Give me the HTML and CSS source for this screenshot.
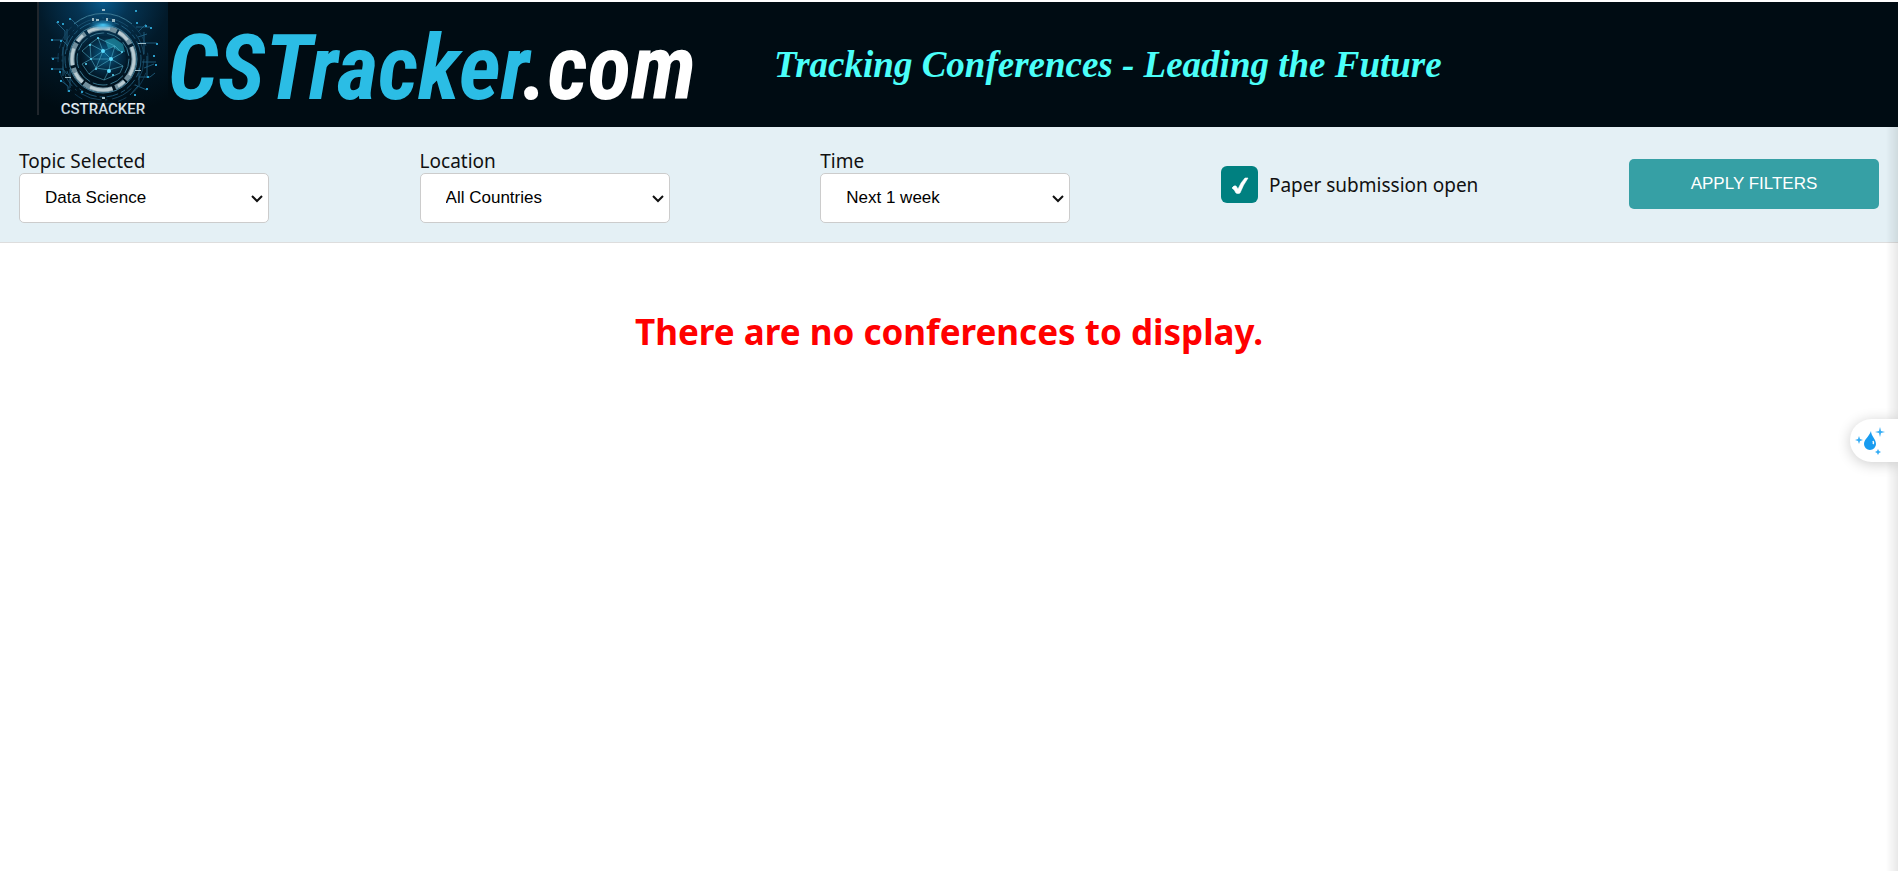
FILE: index.html
```html
<!DOCTYPE html>
<html lang="en">
<head>
<meta charset="utf-8">
<title>CSTracker.com</title>
<meta name="viewport" content="width=device-width, initial-scale=1">
<link rel="stylesheet" href="styles.css">
</head>
<body>
<header class="site-header">
  <a class="brand" href="#">
    <svg class="brand-emblem" viewBox="0 0 130 113" role="img" aria-label="CSTracker emblem">
      <defs>
        <radialGradient id="glow" cx="50%" cy="0%" r="100%">
          <stop offset="0" stop-color="#07588a"/>
          <stop offset=".2" stop-color="#053453"/>
          <stop offset=".5" stop-color="#021a2a"/>
          <stop offset="1" stop-color="#000c13"/>
        </radialGradient>
        <radialGradient id="globe" cx="55%" cy="40%" r="60%">
          <stop offset="0" stop-color="#0a618c"/>
          <stop offset=".5" stop-color="#05304b"/>
          <stop offset="1" stop-color="#010f1a"/>
        </radialGradient>
        <radialGradient id="flare">
          <stop offset="0" stop-color="#4fd2ff"/>
          <stop offset="1" stop-color="#0a7fc0" stop-opacity="0"/>
        </radialGradient>
        <linearGradient id="metal" x1="0" y1="0" x2="0" y2="1">
          <stop offset="0" stop-color="#fff"/>
          <stop offset="1" stop-color="#9fbccd"/>
        </linearGradient>
      </defs>
      <rect width="130" height="113" fill="url(#glow)"/>
      <path d="M0 0V113" stroke="#20262c" stroke-width="2"/>
      <g fill="none" stroke="#2a7196" stroke-width=".7">
        <path d="M14 38H24L30 44M18 20L27 29V38M21 56H13M14 67H25L29 72M22 78L30 84V90M33 17L40 24M108 22L100 30M98 25L112 25M102 41H119M100 35L109 32M104 60H118M106 66L116 62M101 75H112L117 71M97 83L109 88M92 93L100 84M29 27V48M25 45V74M32 67V86M106 30V52M109 54V76M101 66V84"/>
        <circle cx="65" cy="57" r="38" stroke-dasharray="12 2 5 3"/>
        <circle cx="65" cy="57" r="41" stroke="#205777" stroke-dasharray="22 5 2 4"/>
        <circle cx="65" cy="57" r="45" stroke="#164866" stroke-dasharray="9 5 25 7"/>
      </g>
      <path d="M36 22A45 45 0 0 1 94 22" fill="none" stroke="#397792"/>
      <g fill="none">
        <circle cx="65" cy="57" r="31" stroke="#718f9d" stroke-width="5" stroke-dasharray="23 2 11 3 30 2 17 3"/>
        <circle cx="65" cy="57" r="31" stroke="#b9cbd2" stroke-width="3" stroke-dasharray="17 8 8 6 23 9 12 8"/>
        <circle cx="65" cy="57" r="34" stroke="#3c7893" stroke-width="1"/>
        <circle cx="65" cy="57" r="26" stroke="#37738c" stroke-width="1" stroke-dasharray="15 3"/>
      </g>
      <circle cx="65" cy="57" r="23" fill="url(#globe)"/>
      <path d="M67 38L76 36L85 42L87 50L80 49L75 45L70 46Z" fill="#25a4ba" opacity=".6"/>
      <g fill="none" stroke="#5fc2dc" stroke-width=".5">
        <path d="M44 49L52 42L65 49L73 57L84 51L77 44L65 49L60 36L52 42L53 57L65 49L58 66L53 57L44 62L51 72L58 66L71 68L73 57L85 64L71 68L66 78L51 72M60 36L77 44L73 57M44 49L53 57L73 57M58 66L73 57M66 78L82 71L85 64"/>
      </g>
      <g fill="#5bdcff">
        <circle cx="65" cy="49" r="2"/><circle cx="73" cy="57" r="2"/><circle cx="71" cy="69" r="2"/><circle cx="84" cy="50" r="1"/><circle cx="58" cy="67" r="1"/><circle cx="53" cy="57" r="1"/><circle cx="48" cy="62" r="1"/><circle cx="52" cy="43" r="1"/><circle cx="75" cy="73" r="1"/><circle cx="60" cy="36" r="1"/>
      </g>
      <ellipse cx="65" cy="23" rx="15" ry="5" fill="url(#flare)"/>
      <g fill="#9dbac5">
        <path d="M54 16h2v3h-2zM58 17h3v2h-3zM68 16h2v3h-2zM74 17h3v3h-3zM100 41h8v1h-8zM27 75h6v1h-6zM97 68h6v1h-6zM64 7h3v2h-3zM64 95h3v2h-3z"/>
      </g>
      <g fill="#2a9cc8">
        <path d="M19 19h2v2h-2zM24 21h2v2h-2zM31 16h2v2h-2zM13 37h2v2h-2zM22 38h2v2h-2zM14 56h2v2h-2zM13 66h2v2h-2zM21 69h2v2h-2zM22 78h2v2h-2zM97 8h2v2h-2zM98 20h2v2h-2zM107 23h2v2h-2zM112 25h2v2h-2zM118 41h2v2h-2zM115 53h2v2h-2zM117 62h2v2h-2zM109 74h2v2h-2zM108 86h2v2h-2zM96 92h2v2h-2zM30 88h2v2h-2zM43 89h2v2h-2z"/>
      </g>
      <text class="emblem-text" x="65" y="112" text-anchor="middle" fill="url(#metal)">CSTRACKER</text>
    </svg>
    <span class="wordmark">CSTracker<span class="wordmark-tld">.com</span></span>
  </a>
  <p class="tagline">Tracking Conferences - Leading the Future</p>
</header>

<form class="filters">
  <div class="field">
    <label for="topic">Topic Selected</label>
    <div class="picker-wrap">
      <select id="topic" class="picker"><option>Data Science</option></select>
      <svg class="chevron" viewBox="0 0 12 8" aria-hidden="true"><path d="M1 1L6 6L11 1"/></svg>
    </div>
  </div>
  <div class="field">
    <label for="location">Location</label>
    <div class="picker-wrap">
      <select id="location" class="picker"><option>All Countries</option></select>
      <svg class="chevron" viewBox="0 0 12 8" aria-hidden="true"><path d="M1 1L6 6L11 1"/></svg>
    </div>
  </div>
  <div class="field">
    <label for="time">Time</label>
    <div class="picker-wrap">
      <select id="time" class="picker"><option>Next 1 week</option></select>
      <svg class="chevron" viewBox="0 0 12 8" aria-hidden="true"><path d="M1 1L6 6L11 1"/></svg>
    </div>
  </div>
  <div class="check">
    <span class="check-box">
      <input id="open" class="check-input" type="checkbox" checked>
      <svg class="check-mark" viewBox="0 0 37 37" aria-hidden="true"><path d="M11 22Q13 19 15 20L17 23Q20 16 24 12L27 12Q22 19 19 27Q17 28 15 27Q14 24 11 22Z" fill="#fff" stroke="#fff" stroke-width=".6"/></svg>
    </span>
    <label for="open">Paper submission open</label>
  </div>
  <button class="apply" type="button">APPLY FILTERS</button>
</form>

<main class="results">
  <h1 class="empty">There are no conferences to display.</h1>
</main>

<div class="edge-shade"></div>
<button class="assistant" type="button" aria-label="Open assistant">
  <svg class="assistant-icon" viewBox="0 0 32 28" aria-hidden="true">
    <path d="M17 4C17 9 22 12 22 17A6 6 0 0 1 10 17C10 12 15 10 17 4Z" fill="#189cf0"/>
    <path d="M19 14Q20 16 19 17" fill="none" stroke="#fff" stroke-width="1.5"/>
    <path d="M26 0L27 4L31 5L27 6L26 10L25 6L21 5L25 4ZM5 9L6 12L9 13L6 14L5 17L4 14L1 13L4 12ZM24 22L25 24L27 25L25 26L24 28L23 26L21 25L23 24Z" fill="#36adf5"/>
  </svg>
</button>
</body>
</html>
```
FILE: styles.css
```css
* {
  box-sizing: border-box;
}

body {
  margin: 0;
  padding-top: 2px;
  background: #fff;
  color: #111;
  font-family: "Segoe UI", "Noto Sans", sans-serif;
}

.site-header {
  display: flex;
  align-items: flex-start;
  gap: 78px;
  min-height: 125px;
  padding-left: 2%;
  background: #000c13;
}

.brand {
  display: flex;
  align-items: flex-start;
  text-decoration: none;
}

.brand-emblem {
  display: block;
  flex: none;
  width: 130px;
  height: 113px;
  overflow: visible;
}

.emblem-text {
  font: 500 15px Roboto, sans-serif;
}

.wordmark {
  padding-top: 14px;
  color: #2bbde5;
  font: italic 700 90px/106px "Roboto Condensed", Roboto, sans-serif;
  white-space: nowrap;
}

.wordmark-tld {
  color: #fff;
}

.tagline {
  margin: 0;
  padding-top: 40px;
  color: #4bfff9;
  font: italic 700 37px/46px "Liberation Serif", serif;
  white-space: nowrap;
}

.filters {
  display: flex;
  justify-content: space-between;
  align-items: flex-start;
  padding: 22px 1% 19px;
  border-bottom: 1px solid #ddd;
  background: #e4f0f5;
  font-size: 19px;
  line-height: 24px;
}

.field {
  display: flex;
  flex-direction: column;
  width: 250px;
}

.picker-wrap {
  position: relative;
}

.picker {
  display: block;
  width: 100%;
  height: 50px;
  padding: 0 25px 2px;
  border: 1px solid #ccc;
  border-radius: 5px;
  background-color: #fff;
  color: #000;
  font: 17px "Liberation Sans", sans-serif;
  appearance: none;
}

.chevron {
  position: absolute;
  top: 22px;
  right: 6px;
  width: 12px;
  height: 8px;
  fill: none;
  stroke: #111;
  stroke-width: 2;
  pointer-events: none;
}

.check {
  display: flex;
  align-items: center;
  gap: 11px;
  padding-top: 17px;
}

.check-box {
  position: relative;
  display: flex;
}

.check-input {
  width: 37px;
  height: 37px;
  margin: 0;
  border-radius: 6px;
  background: #008080;
  appearance: none;
}

.check-mark {
  position: absolute;
  inset: 0;
  display: none;
  pointer-events: none;
}

.check-input:checked + .check-mark {
  display: block;
}

.apply {
  width: 250px;
  height: 50px;
  margin-top: 10px;
  border: 0;
  border-radius: 5px;
  background: #36a0a5;
  color: #fff;
  font: 17px "Liberation Sans", sans-serif;
}

.results {
  padding: 62px 1% 0;
}

.empty {
  margin: 0;
  color: #f00;
  font-size: 35px;
  line-height: 54px;
  text-align: center;
}

.edge-shade {
  position: fixed;
  inset: 127px 0 0 auto;
  width: 12px;
  background: linear-gradient(to left, rgba(0, 0, 0, .09), rgba(0, 0, 0, 0));
  pointer-events: none;
}

.assistant {
  position: fixed;
  top: 419px;
  right: 0;
  width: 48px;
  height: 43px;
  padding: 0 0 0 4px;
  border: 0;
  border-radius: 22px 0 0 22px;
  background: #fff;
  box-shadow: 0 2px 14px rgba(0, 0, 0, .2);
}

.assistant-icon {
  display: block;
  width: 32px;
  height: 28px;
}
```
